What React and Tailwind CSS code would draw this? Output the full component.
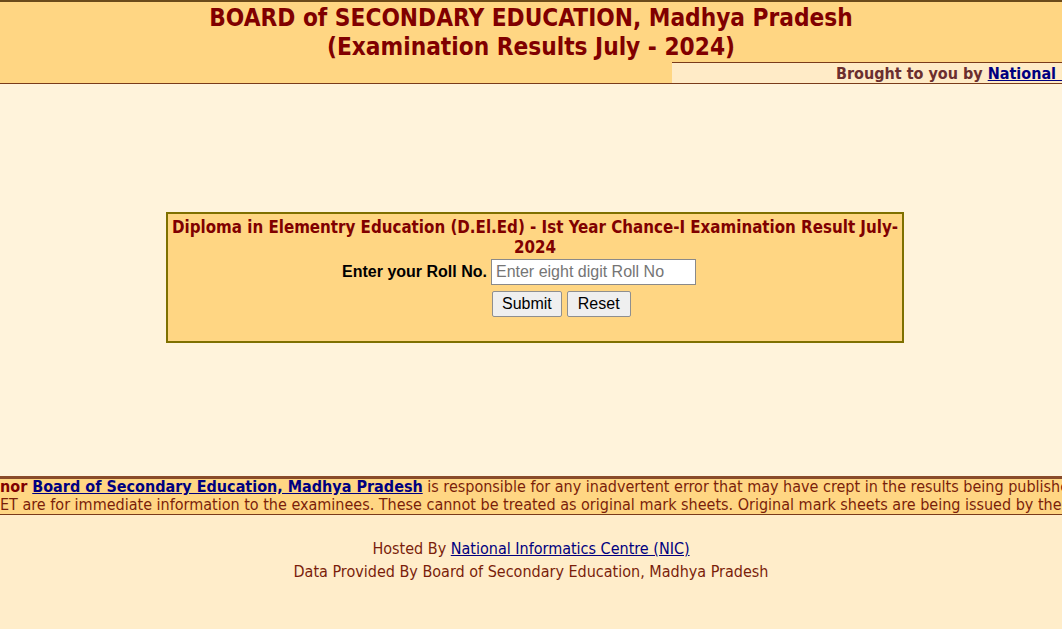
import React from 'react';

const tahoma = { fontFamily: '"DejaVu Sans Condensed", "DejaVu Sans", sans-serif' };
const arial = { fontFamily: '"Liberation Sans", Arial, sans-serif' };

export default function App() {
  return (
    <div className="min-h-[629px] w-full overflow-hidden bg-[#fff3db]" style={tahoma}>
      {/* header */}
      <div className="border-t-2 border-b border-t-[#6b4a1a] border-b-[#7a3b1a] bg-[#ffd683]">
        <div className="pt-[2px] text-center text-[24.2px] font-bold leading-[29px] text-[#800000]">
          <div>BOARD of SECONDARY EDUCATION, Madhya Pradesh</div>
          <div>(Examination Results July - 2024)</div>
        </div>
        <div className="flex h-[21px]">
          <div className="w-[672px] shrink-0" />
          <div className="flex-1 overflow-hidden whitespace-nowrap border-t border-[#7a3b1a] bg-[#ffebc7] pl-[164px] pt-[2px] text-[16px] font-bold leading-[18px] text-[#6b2f2f]">
            Brought to you by <a href="#" className="text-[#000080] underline">National Informatics Centre</a>
          </div>
        </div>
      </div>

      {/* form box */}
      <div className="flex h-[392px] items-start justify-center pt-[128px]">
        <div className="ml-[8px] h-[131px] w-[738px] border-2 border-[#7f7000] bg-[#ffd683] pt-[3px] text-center">
          <div className="text-[16.8px] font-bold leading-[20px] text-[#800000]">
            Diploma in Elementry Education (D.El.Ed) - Ist Year Chance-I Examination Result July-<br />2024
          </div>
          <div className="mt-[2px] flex items-center justify-center gap-[4px] pr-[32px]" style={arial}>
            <span className="text-[16px] font-bold text-black">Enter your Roll No.</span>
            <input
              type="text"
              placeholder="Enter eight digit Roll No"
              className="h-[26px] w-[205px] border border-[#8a8a8a] bg-white px-[4px] text-[16px] text-black placeholder:text-[#757575]"
            />
          </div>
          <div className="mt-[6px] flex justify-start gap-[5px] pl-[324px]" style={arial}>
            <button className="h-[26px] rounded-[2px] border border-[#8f8f8f] bg-[#efefef] px-[9px] text-[16px] text-black">Submit</button>
            <button className="h-[26px] rounded-[2px] border border-[#8f8f8f] bg-[#efefef] px-[10px] text-[16px] text-black">Reset</button>
          </div>
        </div>
      </div>

      {/* notice marquee */}
      <div className="border-t-[3px] border-b border-t-[#8a4b2a] border-b-[#7a3b1a] bg-[#ffd683] text-[16px] leading-[16px] text-[#7a1e0a]">
        <div className="overflow-hidden whitespace-nowrap">
          <span className="font-bold text-[#800000]">nor </span>
          <a href="#" className="font-bold text-[#000080] underline">Board of Secondary Education, Madhya Pradesh</a>
          {' '}is responsible for any inadvertent error that may have crept in the results being published on NET.
        </div>
        <div className="overflow-hidden whitespace-nowrap pt-[2px] pb-[1px]">
          ET are for immediate information to the examinees. These cannot be treated as original mark sheets. Original mark sheets are being issued by the Board separately.
        </div>
      </div>

      {/* footer */}
      <div className="bg-[#ffedca] pt-[22px] pb-[52px] text-center text-[16px] leading-[23px] text-[#7a1e0a]">
        <div>
          Hosted By <a href="#" className="text-[#000080] underline">National Informatics Centre (NIC)</a>
        </div>
        <div>Data Provided By Board of Secondary Education, Madhya Pradesh</div>
      </div>
    </div>
  );
}
